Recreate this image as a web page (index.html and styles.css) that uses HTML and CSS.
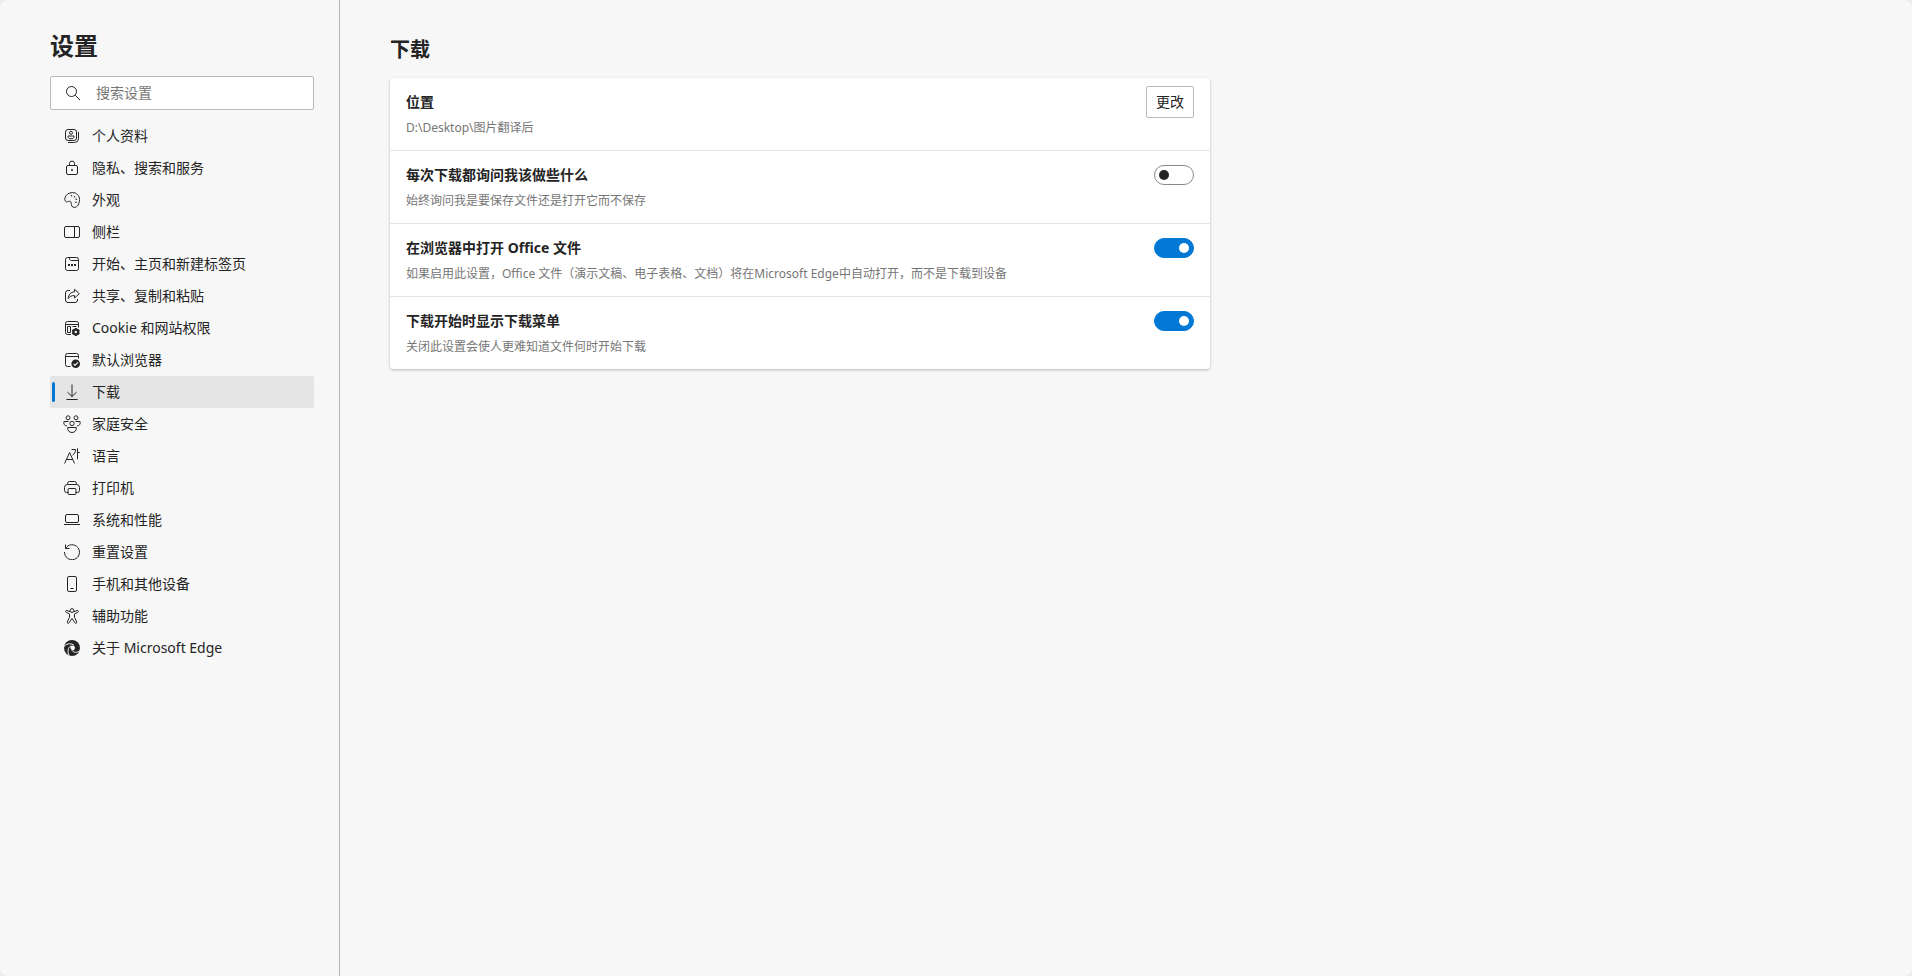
FILE: index.html
```
<!DOCTYPE html>
<html lang="zh-CN">
<head>
    <meta charset="UTF-8">
    <meta name="viewport" content="width=device-width, initial-scale=1.0">
    <title>设置</title>
    <link rel="stylesheet" href="styles.css">
</head>
<body>
    <div class="page">
        <aside class="sidebar">
            <h1>设置</h1>

            <div class="search">
                <svg class="icon" viewBox="0 0 16 16"><circle cx="6.5" cy="6.5" r="5"/><path d="M10.2 10.2 15 15"/></svg>
                <input type="search" placeholder="搜索设置" aria-label="搜索设置">
            </div>

            <nav class="menu">
                <a href="#" class="menu-item">
                    <svg class="icon" viewBox="0 0 16 16"><rect x="1.5" y="1.5" width="11" height="11" rx="2.5"/><path d="M4 14.5h6.5a4 4 0 0 0 4-4V4"/><circle cx="7" cy="4.8" r="1.5"/><path d="M4 8h6v.8c0 1.2-1.3 2-3 2s-3-.8-3-2z"/></svg>
                    个人资料
                </a>
                <a href="#" class="menu-item">
                    <svg class="icon" viewBox="0 0 16 16"><rect x="2.5" y="5.5" width="11" height="9" rx="1.5"/><path d="M5.5 5.5V3.500a2.500 2.500 0 0 1 5 0v2"/><circle class="fill" cx="8" cy="10" r="1"/></svg>
                    隐私、搜索和服务
                </a>
                <a href="#" class="menu-item">
                    <svg class="icon" viewBox="0 0 16 16"><path d="M.8 6.300C1.700 2.500 5 .6 8.500.6c4.200 0 7 3 7 6.900 0 4.500-2.200 7.900-5.100 7.900-3 0-2.900-2.300-3.200-4.300C6.900 9.400 5.900 8.700 4.600 9.400c-1.200.7-2.300.8-3.100-.2C.8 8.300.6 7.400.8 6.300z"/><circle class="fill" cx="7.500" cy="3.700" r=".8"/><circle class="fill" cx="10.500" cy="4.800" r=".8"/><circle class="fill" cx="12.300" cy="7.300" r=".8"/><circle class="fill" cx="12" cy="10.200" r=".8"/></svg>
                    外观
                </a>
                <a href="#" class="menu-item">
                    <svg class="icon" viewBox="0 0 16 16"><rect x=".5" y="2.500" width="15" height="11" rx="1.500"/><path d="M10.500 2.500v11"/></svg>
                    侧栏
                </a>
                <a href="#" class="menu-item">
                    <svg class="icon" viewBox="0 0 16 16"><rect x="1.500" y="1.500" width="13" height="13" rx="2"/><path d="M5.500 1.500v1.200c0 1 .6 1.800 1.800 1.800h7.200"/><path class="fill" d="M4 8h2v2H4zM7 8h2v2H7zM10 8h2v2h-2z"/></svg>
                    开始、主页和新建标签页
                </a>
                <a href="#" class="menu-item">
                    <svg class="icon" viewBox="0 0 16 16"><path d="M6 2.500H4A2.500 2.500 0 0 0 1.500 5v7A2.500 2.500 0 0 0 4 14.500h7a2.500 2.500 0 0 0 2.500-2.500v-1"/><path d="M10.500 1.300 15.300 5.700 10.500 10V7.600C7.700 7.400 5.800 8.400 4.200 10.600 4.500 7 6.500 4 10.500 3.800z"/></svg>
                    共享、复制和粘贴
                </a>
                <a href="#" class="menu-item">
                    <svg class="icon" viewBox="0 0 16 16"><path d="M7 14.500H3.500a2 2 0 0 1-2-2v-9a2 2 0 0 1 2-2h9a2 2 0 0 1 2 2v4M1.500 4.500h13M3.500 6.500h3v6h-3zM8.500 6.500h4"/><circle class="ring" cx="11.800" cy="12" r="2.400"/><path class="thick" d="M11.800 8v1.500M11.800 14.500V16M8.300 10l1.300.8M14 13.200l1.300.8M8.300 14l1.300-.8M14 10.800l1.300-.8"/></svg>
                    Cookie 和网站权限
                </a>
                <a href="#" class="menu-item">
                    <svg class="icon" viewBox="0 0 16 16"><path d="M6.500 14.500h-3a2 2 0 0 1-2-2v-9a2 2 0 0 1 2-2h9a2 2 0 0 1 2 2v3M1.500 4.500h13"/><circle class="fill" cx="11.700" cy="11.700" r="4.300"/><path class="check" d="m9.600 11.900 1.400 1.400 2.900-2.900"/></svg>
                    默认浏览器
                </a>
                <a href="#" class="menu-item active" aria-current="page">
                    <svg class="icon" viewBox="0 0 16 16"><path d="M8 .5v12M3.500 8.200 8 12.500l4.500-4.300M2.500 15.500h11"/></svg>
                    下载
                </a>
                <a href="#" class="menu-item">
                    <svg class="icon wide" viewBox="0 0 18 18"><circle cx="5" cy="2.800" r="2"/><circle cx="13" cy="2.800" r="2"/><circle cx="9" cy="8.500" r="2.200"/><path d="M4.800 12.500h8.400c.5 3-1.400 5-4.200 5s-4.700-2-4.200-5zM5.500 6.500H1c-.8 2.500.5 4.300 3 4.500M12.500 6.500H17c.8 2.500-.5 4.300-3 4.500"/></svg>
                    家庭安全
                </a>
                <a href="#" class="menu-item">
                    <svg class="icon" viewBox="0 0 16 16"><path d="M.6 15.500 5.600 4.500l5 11M2.400 11.500h6.400M7.500 1.500h4c0 2.500-1 4.500-3 5.700M13.500.3v11M13.500 4.500h2.300"/></svg>
                    语言
                </a>
                <a href="#" class="menu-item">
                    <svg class="icon" viewBox="0 0 16 16"><path d="M3.500 4.500v-1a2 2 0 0 1 2-2h5a2 2 0 0 1 2 2v1M4.500 12.500h-2a2 2 0 0 1-2-2v-3a3 3 0 0 1 3-3h9a3 3 0 0 1 3 3v3a2 2 0 0 1-2 2h-2"/><rect x="4" y="8.500" width="8" height="6" rx="1"/></svg>
                    打印机
                </a>
                <a href="#" class="menu-item">
                    <svg class="icon" viewBox="0 0 16 16"><rect x="1.500" y="2.500" width="13" height="8" rx="1.500"/><path d="M0 12.500h16"/></svg>
                    系统和性能
                </a>
                <a href="#" class="menu-item">
                    <svg class="icon" viewBox="0 0 16 16"><path d="M1.500 4.500A7.500 7.500 0 1 1 .5 8M1.500.5v4h4"/></svg>
                    重置设置
                </a>
                <a href="#" class="menu-item">
                    <svg class="icon" viewBox="0 0 16 16"><rect x="3.500" y=".5" width="9" height="15" rx="1.500"/><path d="M6.500 12.500h3"/></svg>
                    手机和其他设备
                </a>
                <a href="#" class="menu-item">
                    <svg class="icon" viewBox="0 0 16 16"><circle cx="8" cy="2.500" r="1.900"/><path d="M6.300 3.800 3 2.500c-1.200-.4-1.900 1.200-.8 1.800L5.500 6v3.200L3.300 14c-.4 1.200 1.200 1.900 1.800.8L8 10.500l2.900 4.300c.6 1.100 2.200.4 1.800-.8L10.500 9.200V6l3.300-1.700c1.100-.6.400-2.200-.8-1.800L9.700 3.800"/></svg>
                    辅助功能
                </a>
                <a href="#" class="menu-item">
                    <svg class="icon" viewBox="0 0 16 16"><circle class="fill" cx="8" cy="8" r="8"/><path class="swirl" d="M0 6.500C3.500 2.700 8 3.500 9.800 5.200M5.300 15.700C2.900 11.500 4.200 7.500 6.600 6.100M15.800 10.500c-2.600 2.600-6.300 2.300-8-.3"/><path class="hole" d="M6.400 6.300C8 4.900 10.700 5.600 11 7.600c.1 1-.5 1.700-.8 2.400-1.700 1-4.400-.7-3.800-3.700z"/></svg>
                    关于 Microsoft Edge
                </a>
            </nav>
        </aside>

        <main class="content">
            <h2>下载</h2>

            <div class="card">
                <div class="row">
                    <div class="row-text">
                        <h3>位置</h3>
                        <p>D:\Desktop\图片翻译后</p>
                    </div>
                    <button type="button" class="btn">更改</button>
                </div>
                <div class="row">
                    <div class="row-text">
                        <h3><label for="ask">每次下载都询问我该做些什么</label></h3>
                        <p>始终询问我是要保存文件还是打开它而不保存</p>
                    </div>
                    <input type="checkbox" class="toggle" id="ask">
                </div>
                <div class="row">
                    <div class="row-text">
                        <h3><label for="office">在浏览器中打开 Office 文件</label></h3>
                        <p>如果启用此设置，Office 文件（演示文稿、电子表格、文档）将在Microsoft Edge中自动打开，而不是下载到设备</p>
                    </div>
                    <input type="checkbox" class="toggle" id="office" checked>
                </div>
                <div class="row">
                    <div class="row-text">
                        <h3><label for="menu">下载开始时显示下载菜单</label></h3>
                        <p>关闭此设置会使人更难知道文件何时开始下载</p>
                    </div>
                    <input type="checkbox" class="toggle" id="menu" checked>
                </div>
            </div>
        </main>
    </div>
</body>
</html>
```

FILE: styles.css
```
* {
    box-sizing: border-box;
}

body {
    margin: 0;
    background: #ebebeb;
    color: #242424;
    font-family: "Noto Sans", "Noto Sans CJK SC", sans-serif;
    font-size: 14px;
    line-height: 20px;
}

h1, h2, h3, p {
    margin: 0;
}

.page {
    display: flex;
    min-height: 100vh;
    background: #f7f7f7;
    border-radius: 8px;
}

/* Sidebar */
.sidebar {
    flex: none;
    width: 340px;
    padding: 30px 25px 32px 50px;
    border-right: 1px solid #b3b3b3;
}

.sidebar h1 {
    margin-bottom: 14px;
    font-size: 24px;
    line-height: 32px;
}

.search {
    display: flex;
    align-items: center;
    gap: 15px;
    height: 34px;
    margin-bottom: 10px;
    padding: 0 14px;
    background: #fff;
    border: 1px solid #bababa;
    border-radius: 2px;
}

.search input {
    flex: 1;
    min-width: 0;
    padding: 0;
    border: none;
    outline: none;
    background: transparent;
    font: inherit;
}

.search input::placeholder {
    color: #767676;
}

.menu {
    display: flex;
    flex-direction: column;
}

.menu-item {
    position: relative;
    display: flex;
    align-items: center;
    gap: 12px;
    height: 32px;
    padding: 0 14px;
    border-radius: 2px;
    color: inherit;
    text-decoration: none;
}

.menu-item:hover {
    background: #eee;
}

.menu-item.active {
    background: #e5e5e5;
}

.menu-item.active::before {
    content: "";
    position: absolute;
    left: 2px;
    top: 6px;
    width: 3px;
    height: 20px;
    border-radius: 2px;
    background: #0078d4;
}

/* Icons */
.icon {
    flex: none;
    width: 16px;
    height: 16px;
    fill: none;
    stroke: #242424;
    stroke-width: 1;
}

.icon.wide {
    width: 18px;
    height: 18px;
    margin: 0 -1px;
}

.icon .fill {
    fill: #242424;
    stroke: none;
}

.icon .ring {
    stroke-width: 2.4;
}

.icon .thick {
    stroke-width: 2;
}

.icon .check,
.icon .swirl {
    stroke: #f7f7f7;
    stroke-width: 1.2;
}

.icon .swirl {
    stroke-width: 1;
}

.icon .hole {
    fill: #f7f7f7;
    stroke: none;
}

/* Content */
.content {
    flex: 1;
    padding: 36px 50px;
}

.content h2 {
    margin-bottom: 14px;
    font-size: 20px;
    line-height: 28px;
}

.card {
    max-width: 820px;
    background: #fff;
    border-radius: 4px;
    box-shadow: 0 1px 3px rgba(0, 0, 0, 0.26);
}

.row {
    display: flex;
    justify-content: space-between;
    align-items: flex-start;
    padding: 8px 16px 13px;
}

.row + .row {
    border-top: 1px solid #e5e5e5;
}

.row-text {
    padding-top: 6px;
}

.row h3 {
    margin-bottom: 6px;
    font-size: 14px;
    line-height: 20px;
}

.row p {
    color: #767676;
    font-size: 12px;
    line-height: 19px;
}

.btn {
    width: 48px;
    height: 32px;
    padding: 0;
    background: #fff;
    border: 1px solid #bababa;
    border-radius: 2px;
    color: inherit;
    font: inherit;
}

/* Toggle switch */
.toggle {
    appearance: none;
    flex: none;
    display: flex;
    align-items: center;
    width: 40px;
    height: 20px;
    margin: 6px 0;
    padding: 0 4px;
    background: #fff;
    border: 1px solid #8a8a8a;
    border-radius: 10px;
}

.toggle::before {
    content: "";
    width: 10px;
    height: 10px;
    border-radius: 50%;
    background: #242424;
}

.toggle:checked {
    justify-content: flex-end;
    background: #0078d4;
    border-color: #0078d4;
}

.toggle:checked::before {
    background: #fff;
}
```
